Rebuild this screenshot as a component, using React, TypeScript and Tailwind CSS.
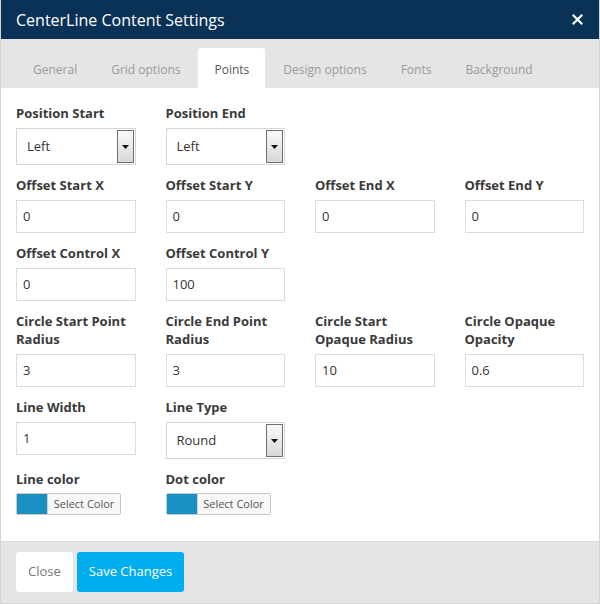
import React from "react";

const font = { fontFamily: '"Open Sans", "Noto Sans", sans-serif' };

function Label({ children }: { children: React.ReactNode }) {
  return (
    <div className="mb-[6px] text-[13px] font-bold leading-[18px] text-[#3a3a3a]">
      {children}
    </div>
  );
}

function TextField({ label, value }: { label: string; value: string }) {
  return (
    <div>
      <Label>{label}</Label>
      <div className="flex h-[33px] items-center border border-[#dcdcdc] bg-white pl-[6px] text-[13px] text-[#333]">
        {value}
      </div>
    </div>
  );
}

function SelectField({ label, value }: { label: string; value: string }) {
  return (
    <div>
      <Label>{label}</Label>
      <div className="flex h-[37px] items-stretch border border-[#d6d6d6] bg-white p-[1px] text-[13px] text-[#333]">
        <div className="flex flex-1 items-center pl-[9px]">{value}</div>
        <div className="flex w-[17px] items-center justify-center border border-[#6e6e6e] bg-gradient-to-b from-[#fafafa] to-[#d8d8d8]">
          <svg width="7" height="4" viewBox="0 0 7 4">
            <path d="M0 0h7L3.5 4z" fill="#111" />
          </svg>
        </div>
      </div>
    </div>
  );
}

function ColorField({ label }: { label: string }) {
  return (
    <div>
      <Label>{label}</Label>
      <div className="mt-[-1px] flex h-[22px] w-[105px] rounded-[2px] border border-[#c8c8c8]">
        <div className="w-[30px] bg-[#1a8fc2]" />
        <div className="flex flex-1 items-center justify-center border-l border-[#d0d0d0] bg-[#f7f7f7] text-[11px] text-[#555]">
          Select Color
        </div>
      </div>
    </div>
  );
}

const tabs = ["General", "Grid options", "Points", "Design options", "Fonts", "Background"];

export default function App() {
  return (
    <div style={font} className="h-[604px] w-[600px] overflow-hidden bg-white">
      <div className="flex h-full flex-col border border-[#d4d4d4] border-t-0">
        <div className="flex h-[39px] items-center justify-between bg-[#0a3256] pl-[15px] pr-[16px]">
          <span className="text-[16px] text-white">CenterLine Content Settings</span>
          <svg width="11" height="11" viewBox="0 0 11 11">
            <path d="M1.5 1.5l8 8M9.5 1.5l-8 8" stroke="#fff" strokeWidth="2.2" strokeLinecap="square" />
          </svg>
        </div>
        <div className="flex h-[49px] items-end gap-[2px] bg-[#e5e5e5] pl-[16px]">
          {tabs.map((t) => (
            <div
              key={t}
              className={`flex h-[40px] items-center px-4 pt-[3px] text-[12px] ${
                t === "Points" ? "rounded-t-[3px] bg-white text-[#555]" : "text-[#9a9a9a]"
              }`}
            >
              {t}
            </div>
          ))}
        </div>
        <div className="flex-1 px-[15px] pt-[16px]">
          <div className="grid grid-cols-4 gap-x-[30px] gap-y-[11px]">
            <SelectField label="Position Start" value="Left" />
            <div className="col-span-3 grid grid-cols-3 gap-x-[30px]">
              <SelectField label="Position End" value="Left" />
            </div>
            <TextField label="Offset Start X" value="0" />
            <TextField label="Offset Start Y" value="0" />
            <TextField label="Offset End X" value="0" />
            <TextField label="Offset End Y" value="0" />
            <TextField label="Offset Control X" value="0" />
            <TextField label="Offset Control Y" value="100" />
            <div />
            <div />
            <TextField label="Circle Start Point Radius" value="3" />
            <TextField label="Circle End Point Radius" value="3" />
            <TextField label="Circle Start Opaque Radius" value="10" />
            <TextField label="Circle Opaque Opacity" value="0.6" />
            <TextField label="Line Width" value="1" />
            <SelectField label="Line Type" value="Round" />
            <div />
            <div />
            <ColorField label="Line color" />
            <ColorField label="Dot color" />
          </div>
        </div>
        <div className="flex h-[62px] gap-1 border-t border-[#dadada] bg-[#e5e5e5] px-[15px] pt-[10px]">
          <button className="h-[40px] rounded-[3px] bg-white px-[12px] text-[13px] text-[#777]">
            Close
          </button>
          <button className="h-[40px] rounded-[3px] bg-[#00aeef] px-[12px] text-[13px] text-white">
            Save Changes
          </button>
        </div>
      </div>
    </div>
  );
}
